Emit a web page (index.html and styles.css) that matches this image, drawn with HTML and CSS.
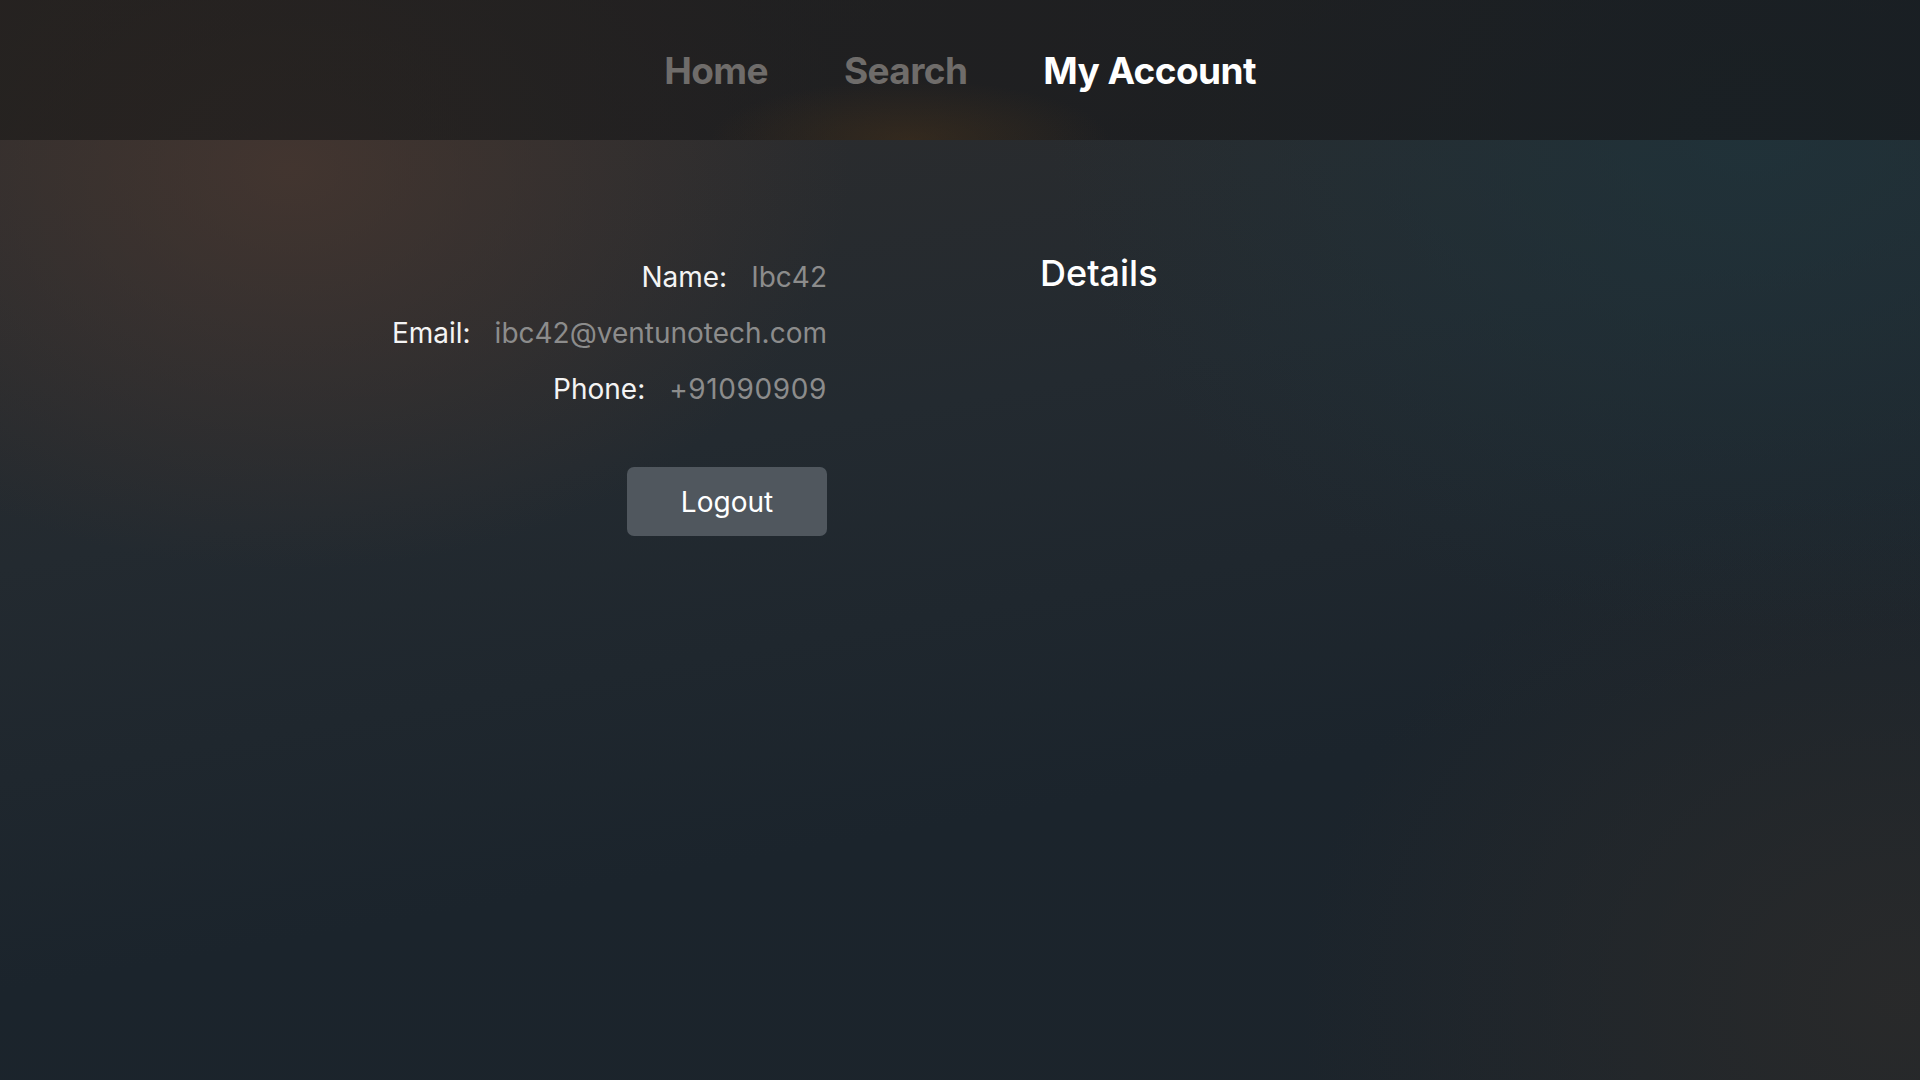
FILE: index.html
```html
<!DOCTYPE html>
<html lang="en">
<head>
    <meta charset="UTF-8">
    <meta name="viewport" content="width=device-width, initial-scale=1.0">
    <title>My Account</title>
    <link rel="stylesheet" href="styles.css">
</head>
<body>
    <header class="tabbar">
        <nav class="tabs">
            <a class="tab" href="#">Home</a>
            <a class="tab" href="#">Search</a>
            <a class="tab active" href="#">My Account</a>
        </nav>
    </header>

    <main class="account">
        <section class="info">
            <div class="row">
                <span class="label">Name:</span>
                <span class="value">Ibc42</span>
            </div>
            <div class="row">
                <span class="label">Email:</span>
                <span class="value">ibc42@ventunotech.com</span>
            </div>
            <div class="row">
                <span class="label">Phone:</span>
                <span class="value num">+91090909</span>
            </div>
            <button class="logout">Logout</button>
        </section>

        <section class="details">
            <h2>Details</h2>
        </section>
    </main>
</body>
</html>
```

FILE: styles.css
```css
html, body {
    height: 100%;
}

body {
    margin: 0;
    padding: 0;
    font-family: Inter, "Noto Sans", Arial, sans-serif;
    color: #f2f2f2;
    background-color: #1c252d;
    background-image:
        radial-gradient(ellipse 560px 400px at 290px 170px, rgba(74, 56, 48, 0.75), rgba(74, 56, 48, 0) 100%),
        radial-gradient(ellipse 700px 500px at 1750px 130px, rgba(30, 52, 60, 0.75), rgba(30, 52, 60, 0) 100%),
        radial-gradient(ellipse 600px 520px at 1900px 1000px, rgba(42, 42, 42, 0.9), rgba(42, 42, 42, 0) 100%),
        linear-gradient(170deg, #302d2c 0%, #232a30 40%, #1b242c 70%, #1c242b 100%);
    overflow: hidden;
}

.tabbar {
    height: 140px;
    display: flex;
    align-items: center;
    justify-content: center;
    background-color: rgba(20, 20, 20, 0.55);
    background-image:
        radial-gradient(ellipse 200px 60px at 910px 140px, rgba(90, 60, 25, 0.35), rgba(90, 60, 25, 0) 100%),
        linear-gradient(90deg, rgba(40, 36, 34, 0.5), rgba(25, 30, 36, 0.5));
}

.tabs {
    display: flex;
    gap: 76px;
}

.tab {
    font-size: 37px;
    font-weight: 700;
    letter-spacing: -0.6px;
    color: #6f6c6a;
    text-decoration: none;
}

.tab.active {
    color: #ffffff;
}

.account {
    display: flex;
    padding-top: 109px;
}

.info {
    width: 827px;
    display: flex;
    flex-direction: column;
    align-items: flex-end;
}

.row {
    display: flex;
    gap: 24px;
    font-size: 28px;
    line-height: 56px;
}

.label {
    color: #f4f4f4;
}

.value {
    color: #8c8c8c;
}

.value.num {
    letter-spacing: 0.6px;
}

.logout {
    margin-top: 50px;
    width: 200px;
    height: 69px;
    border: none;
    border-radius: 7px;
    background-color: #50575e;
    color: #ffffff;
    font-family: inherit;
    font-size: 28px;
}

.details {
    margin-left: 213px;
}

.details h2 {
    margin: 0;
    font-size: 36px;
    font-weight: 500;
    line-height: 48px;
    color: #ffffff;
}
```
